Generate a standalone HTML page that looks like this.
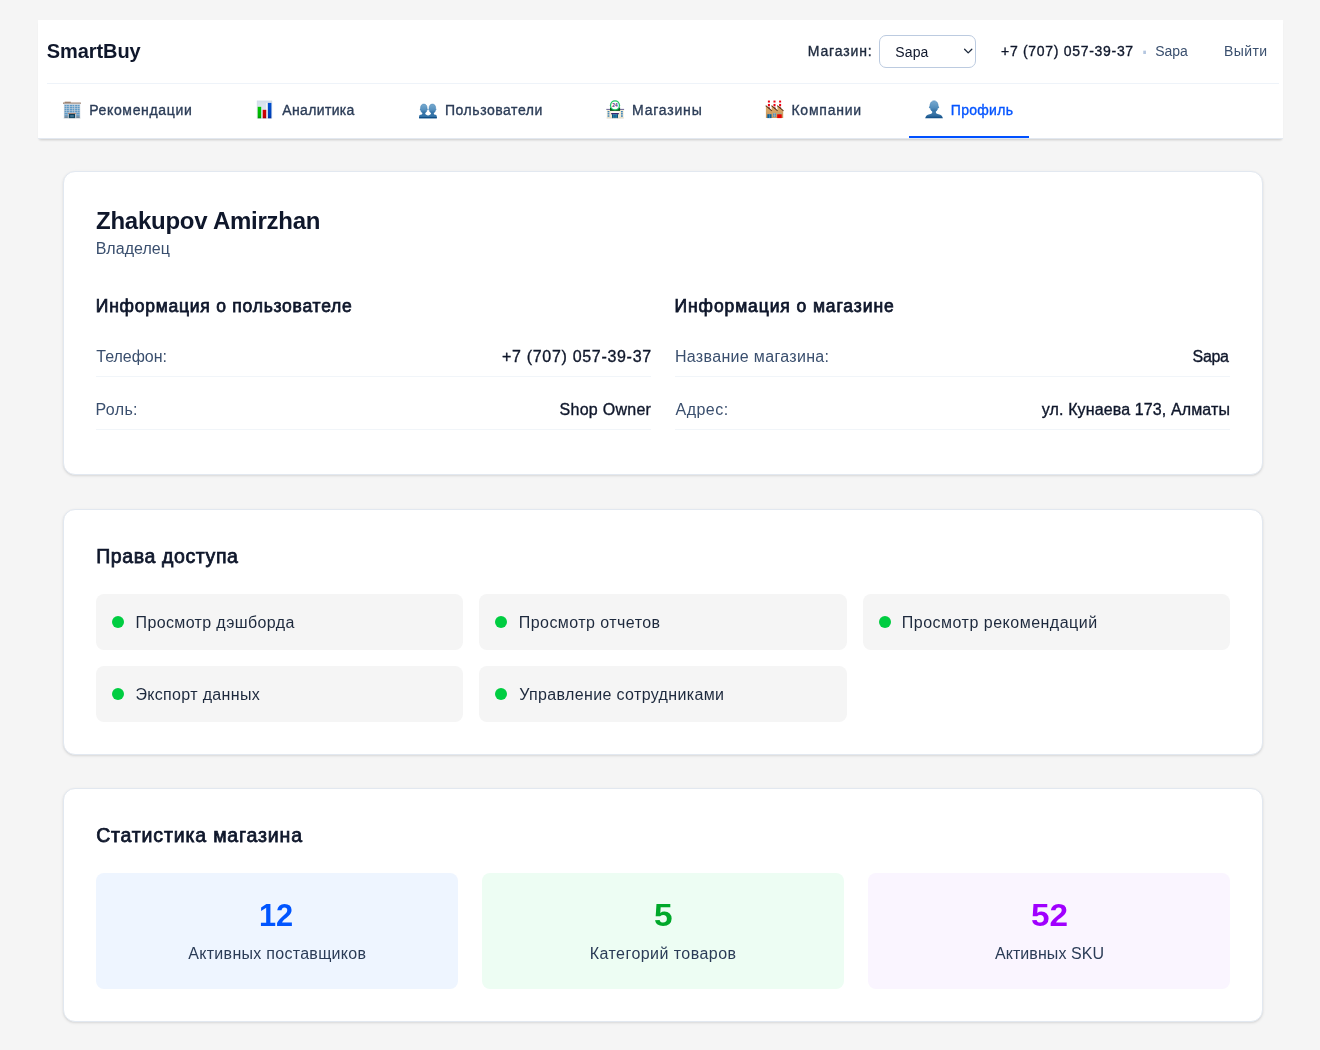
<!DOCTYPE html>
<html lang="ru">
<head>
<meta charset="utf-8">
<title>SmartBuy — Профиль</title>
<style>
*{box-sizing:border-box;margin:0;padding:0}
html,body{width:1320px;height:1050px;overflow:hidden}
body{background:#f5f5f5;font-family:"Liberation Sans",sans-serif;color:#0f172b;position:relative}
.t{position:absolute;white-space:nowrap;line-height:1;font-size:16px}
.abs{position:absolute}
.c9{color:#0f172b}.c8{color:#1d293d}.c7{color:#2b3c57}.c6{color:#3a4f6e}.cb{color:#0555ff}
.b{font-weight:700}
.m{-webkit-text-stroke:0.35px currentColor}
.sb{-webkit-text-stroke:0.75px currentColor}
#hdr{position:absolute;left:38px;top:20px;width:1245px;height:119px;background:#fff;border-bottom:1px solid #e2e8f0;box-shadow:0 2px 2px -1px rgba(0,0,0,.12),0 3px 3px -2px rgba(0,0,0,.06)}
.card{position:absolute;left:63px;width:1200px;background:#fff;border:1px solid #e2e8f0;border-radius:12px;box-shadow:0 1px 3px rgba(0,0,0,.1),0 1px 2px -1px rgba(0,0,0,.1)}
.hr{position:absolute;height:1px;background:#f1f5f9}
.chip{position:absolute;height:56px;width:367.33px;background:#f5f5f5;border-radius:8px}
.dot{position:absolute;width:12px;height:12px;border-radius:50%;background:#00cd41}
.stat{position:absolute;top:873px;height:116px;width:362px;border-radius:8px}
</style>
</head>
<body>

<div id="hdr"></div>
<div class="abs" style="left:47px;top:83px;width:1232px;height:1px;background:#eef3f9"></div>
<div class="abs" style="left:879px;top:35px;width:97px;height:33px;border:1px solid #bccbe0;border-radius:7px;background:#fff"></div>
<svg class="abs" style="left:962px;top:47px" width="12" height="9" viewBox="0 0 12 9"><path d="M2.6 2.3 L6.2 5.9 L9.8 2.3" fill="none" stroke="#1d293d" stroke-width="1.3" stroke-linecap="round" stroke-linejoin="round"/></svg>
<div class="abs" style="left:909px;top:136px;width:120px;height:2px;background:#0050ff"></div>

<!-- icon 1: office building -->
<svg class="abs" style="left:62px;top:100px" width="20" height="20" viewBox="62 100 20 20">
<defs><linearGradient id="gb1" x1="0" y1="0" x2="0" y2="1"><stop offset="0" stop-color="#cfdbe6"/><stop offset="1" stop-color="#b4c2ce"/></linearGradient></defs>
<rect x="64.7" y="101.7" width="6.1" height="1.1" fill="#9a7c66"/>
<rect x="63" y="102.6" width="17.9" height="1.1" fill="#846552"/>
<rect x="63.9" y="103.7" width="16.3" height="14.4" fill="url(#gb1)"/>
<g fill="#5f9ac6">
<rect x="64.6" y="104.9" width="4.3" height="1.45"/><rect x="69.7" y="104.9" width="4.6" height="1.45"/><rect x="75.1" y="104.9" width="4.5" height="1.45"/>
<rect x="64.6" y="106.9" width="4.3" height="1.45"/><rect x="69.7" y="106.9" width="4.6" height="1.45"/><rect x="75.1" y="106.9" width="4.5" height="1.45"/>
<rect x="64.6" y="108.9" width="4.3" height="1.45"/><rect x="69.7" y="108.9" width="4.6" height="1.45"/><rect x="75.1" y="108.9" width="4.5" height="1.45"/>
<rect x="64.6" y="110.9" width="4.3" height="1.45"/><rect x="69.7" y="110.9" width="4.6" height="1.45"/><rect x="75.1" y="110.9" width="4.5" height="1.45"/>
<rect x="64.6" y="112.9" width="3.2" height="1.45"/><rect x="76.3" y="112.9" width="3.3" height="1.45"/>
<rect x="64.6" y="114.8" width="3.2" height="1.1"/><rect x="76.3" y="114.8" width="3.3" height="1.1"/>
</g>
<g fill="#d4dfe9"><rect x="66.6" y="104.6" width=".4" height="8"/><rect x="72" y="104.6" width=".4" height="8"/><rect x="77.3" y="104.6" width=".4" height="8"/></g>
<rect x="64.6" y="116.5" width="3.2" height="1.1" fill="#3e6380"/><rect x="76.3" y="116.5" width="3.3" height="1.1" fill="#3e6380"/>
<rect x="68" y="113" width="7.9" height="1" fill="#b58b79"/>
<rect x="68.9" y="113.9" width="6.1" height="4.2" fill="#0d3f58"/>
<rect x="70.2" y="115" width="3.6" height="2.2" fill="#3a7094"/>
<rect x="63.6" y="117.9" width="16.9" height=".5" fill="#9aa5ae" opacity=".6"/>
</svg>
<!-- icon 2: bar chart -->
<svg class="abs" style="left:255px;top:99px" width="20" height="21" viewBox="255 99 20 21">
<defs>
<linearGradient id="gc0" x1="0" y1="0" x2="0" y2="1"><stop offset="0" stop-color="#d3dfeb"/><stop offset="1" stop-color="#e9eff6"/></linearGradient>
<linearGradient id="gcg" x1="0" y1="0" x2="0" y2="1"><stop offset="0" stop-color="#00c400"/><stop offset=".8" stop-color="#00b400"/><stop offset="1" stop-color="#008c00"/></linearGradient>
<linearGradient id="gcr" x1="0" y1="0" x2="0" y2="1"><stop offset="0" stop-color="#d00000"/><stop offset=".75" stop-color="#c40000"/><stop offset="1" stop-color="#960000"/></linearGradient>
<linearGradient id="gcb" x1="0" y1="0" x2="0" y2="1"><stop offset="0" stop-color="#0050d0"/><stop offset=".85" stop-color="#0040b8"/><stop offset="1" stop-color="#002a98"/></linearGradient>
</defs>
<rect x="257.1" y="100.9" width="14.8" height="17.5" fill="url(#gc0)" stroke="#c9d6e3" stroke-width=".5"/>
<rect x="266.2" y="103" width=".9" height="7" fill="#fbfbf6"/>
<rect x="257.7" y="106.8" width="3.5" height="11.5" fill="url(#gcg)"/>
<rect x="262.7" y="109.8" width="3.5" height="8.5" fill="url(#gcr)"/>
<rect x="267.9" y="102.9" width="3.5" height="15.4" fill="url(#gcb)"/>
</svg>
<!-- icon 3: two busts -->
<svg class="abs" style="left:418px;top:102px" width="20" height="18" viewBox="418 102 20 18">
<defs><linearGradient id="gu3" x1="0" y1="0" x2="0" y2="1"><stop offset="0" stop-color="#78aacf"/><stop offset=".65" stop-color="#5690be"/><stop offset="1" stop-color="#2b699f"/></linearGradient></defs>
<path d="M422.4 111.5 L422.4 113.4 C422.4 114.2 421.2 114.5 420.3 114.8 C419.4 115.1 419.1 115.7 419.1 116.5 L419.1 118.3 L436.8 118.3 L436.8 116.5 C436.8 115.7 436.5 115.1 435.6 114.8 C434.7 114.5 433.8 114.2 433.8 113.4 L433.8 111.5 L431 111.5 L431 113.4 C431 114.4 429.2 115.1 428.1 115.6 C427 115.1 425.2 114.4 425.2 113.4 L425.2 111.5 Z" fill="#3574a8"/>
<rect x="419.1" y="116.9" width="17.7" height="1.4" fill="#0f4d86"/>
<ellipse cx="423.8" cy="108.6" rx="3.3" ry="4.5" fill="url(#gu3)" stroke="#3f7fb3" stroke-width=".5"/>
<ellipse cx="432.4" cy="108.6" rx="3.3" ry="4.5" fill="url(#gu3)" stroke="#3f7fb3" stroke-width=".5"/>
<circle cx="420.4" cy="109.3" r=".6" fill="#4c88b8"/><circle cx="427.2" cy="109.3" r=".6" fill="#4c88b8"/><circle cx="429" cy="109.3" r=".6" fill="#4c88b8"/><circle cx="435.8" cy="109.3" r=".6" fill="#4c88b8"/>
</svg>
<!-- icon 4: convenience store -->
<svg class="abs" style="left:605px;top:99px" width="21" height="21" viewBox="605 99 21 21">
<rect x="606.8" y="109.6" width="16.8" height="8.5" fill="#f1ead2"/>
<rect x="606.3" y="108.9" width="17.8" height=".9" fill="#5a5288"/>
<rect x="610" y="107.5" width="10.1" height="3.4" fill="#0c5a20"/>
<circle cx="615" cy="105.3" r="5.1" fill="#1fc463"/>
<circle cx="615" cy="105.4" r="3.8" fill="#fff"/>
<text x="615" y="107.2" text-anchor="middle" font-family="Liberation Sans, sans-serif" font-weight="700" font-size="4.8" fill="#4b2a7a">24</text>
<rect x="610.6" y="111.4" width="8.8" height="1.5" fill="#fdfdf8"/>
<path d="M611 113 L619 113 L618.4 114.4 L611.6 114.4 Z" fill="#3a2670"/>
<rect x="612" y="114.3" width="6" height="3.8" fill="#1e76a6"/>
<rect x="612" y="114.3" width=".8" height="3.8" fill="#0b4668"/><rect x="617.2" y="114.3" width=".8" height="3.8" fill="#0b4668"/><rect x="614.7" y="114.8" width=".5" height="3.3" fill="#0b4668"/>
<g fill="#3b80ba"><rect x="607.6" y="111" width="1.8" height="1.4"/><rect x="607.6" y="113.1" width="1.8" height="1.4"/><rect x="607.6" y="115.3" width="1.8" height="1.5"/><rect x="621" y="111" width="1.8" height="1.4"/><rect x="621" y="113.1" width="1.8" height="1.4"/><rect x="621" y="115.3" width="1.8" height="1.5"/></g>
<rect x="606.6" y="117.8" width="17.2" height=".5" fill="#a9a48e" opacity=".7"/>
</svg>
<!-- icon 5: factory -->
<svg class="abs" style="left:764px;top:99px" width="21" height="21" viewBox="764 99 21 21">
<defs><linearGradient id="gf5" x1="0" y1="0" x2="0" y2="1"><stop offset="0" stop-color="#dcae6f"/><stop offset="1" stop-color="#c6935a"/></linearGradient></defs>
<g>
<rect x="767.9" y="100.4" width="2" height="8.5" fill="#f4f4f4"/><rect x="773.5" y="100.4" width="2" height="8.5" fill="#f4f4f4"/><rect x="779.1" y="100.4" width="2" height="8.5" fill="#f4f4f4"/>
<g fill="#ee0010"><rect x="767.9" y="100.6" width="2" height="1.9"/><rect x="767.9" y="104" width="2" height="2.3"/><rect x="773.5" y="100.6" width="2" height="1.9"/><rect x="773.5" y="104" width="2" height="2.3"/><rect x="779.1" y="100.6" width="2" height="1.9"/><rect x="779.1" y="104" width="2" height="2.3"/></g>
<g fill="#7c2230"><rect x="767.9" y="107.4" width="2" height="1.8"/><rect x="773.5" y="107.4" width="2" height="1.8"/><rect x="779.1" y="107.4" width="2" height="1.8"/></g>
</g>
<path d="M765.9 105.9 L771.7 110.9 L771.7 105.9 L777.4 110.9 L777.4 105.9 L783.2 110.9 L783.2 118.1 L765.9 118.1 Z" fill="url(#gf5)"/>
<path d="M765.7 105.6 L771.9 110.9 M771.5 105.6 L777.6 110.9 M777.2 105.6 L783.5 110.9" stroke="#5c3414" stroke-width="1.1" fill="none"/>
<rect x="767.3" y="114.2" width="4.2" height="3.9" fill="#0d6098"/><rect x="769.2" y="114.2" width=".5" height="3.9" fill="#6aa6cc"/>
<rect x="772.8" y="113" width="3.3" height="4.2" fill="#d8c7a4"/><g fill="#3f80b6"><rect x="773.1" y="113.4" width="1.2" height="1.5"/><rect x="774.7" y="113.4" width="1.2" height="1.5"/><rect x="773.1" y="115.3" width="1.2" height="1.5"/><rect x="774.7" y="115.3" width="1.2" height="1.5"/></g>
<rect x="777.2" y="113.3" width="4.6" height="1.1" fill="#9fb08a"/>
<rect x="777.2" y="114.3" width="4.5" height="3.8" fill="#e80000"/>
</svg>
<!-- icon 6: bust -->
<svg class="abs" style="left:924px;top:99px" width="21" height="21" viewBox="924 99 21 21">
<defs><linearGradient id="gu6" x1="0" y1="0" x2="0" y2="1"><stop offset="0" stop-color="#78aad0"/><stop offset=".6" stop-color="#558fbd"/><stop offset="1" stop-color="#2f6b9f"/></linearGradient>
<linearGradient id="gs6" x1="0" y1="0" x2="0" y2="1"><stop offset="0" stop-color="#4a84b4"/><stop offset=".7" stop-color="#2f6b9f"/><stop offset="1" stop-color="#0c4a84"/></linearGradient></defs>
<path d="M932.2 110 L932.2 112.5 C932.2 113.5 931 113.9 929.5 114.2 C927 114.7 925.8 115.9 925.2 118.2 L942.9 118.2 C942.3 115.9 941.1 114.7 938.6 114.2 C937.1 113.9 935.9 113.5 935.9 112.5 L935.9 110 Z" fill="url(#gs6)"/>
<circle cx="929.7" cy="107.3" r=".8" fill="#4a84b4"/><circle cx="938.4" cy="107.3" r=".8" fill="#4a84b4"/>
<ellipse cx="934.05" cy="106.3" rx="4.2" ry="5.6" fill="url(#gu6)" stroke="#4585b8" stroke-width=".5"/>
</svg>


<div class="card" style="top:171px;height:304px"></div>
<div class="hr" style="left:96px;width:555px;top:376px"></div>
<div class="hr" style="left:96px;width:555px;top:429px"></div>
<div class="hr" style="left:675px;width:555px;top:376px"></div>
<div class="hr" style="left:675px;width:555px;top:429px"></div>

<div class="card" style="top:509px;height:246px"></div>
<div class="chip" style="left:96px;top:594px"></div><div class="dot" style="left:112px;top:616px"></div>
<div class="chip" style="left:479.33px;top:594px"></div><div class="dot" style="left:495.33px;top:616px"></div>
<div class="chip" style="left:862.67px;top:594px"></div><div class="dot" style="left:878.67px;top:616px"></div>
<div class="chip" style="left:96px;top:666px"></div><div class="dot" style="left:112px;top:688px"></div>
<div class="chip" style="left:479.33px;top:666px"></div><div class="dot" style="left:495.33px;top:688px"></div>

<div class="card" style="top:788px;height:234px"></div>
<div class="stat" style="left:96px;background:#eef5ff"></div>
<div class="stat" style="left:482px;background:#edfdf3"></div>
<div class="stat" style="left:868px;background:#faf5ff"></div>

<div id="txt" style="position:absolute;left:0;top:0;width:1320px;height:1050px;will-change:transform">
<div id="logo" class="t b c9" style="left:46.87px;top:40.57px;font-size:20px;letter-spacing:-0.086px;">SmartBuy</div>
<div id="mag" class="t m c8" style="left:807.78px;top:44.45px;font-size:14px;letter-spacing:0.849px;">Магазин:</div>
<div id="ssap" class="t c9" style="left:895.33px;top:45.45px;font-size:14px;letter-spacing:0.114px;">Sapa</div>
<div id="phone" class="t m c9" style="left:1001.08px;top:44.35px;font-size:14px;letter-spacing:0.695px;">+7 (707) 057-39-37</div>
<div id="sep" class="t b" style="left:1141.79px;top:42.28px;font-size:22px;letter-spacing:0.000px;color:#b4c6e0;transform:scaleX(0.8539);transform-origin:0 0">·</div>
<div id="hsap" class="t c6" style="left:1155.33px;top:44.35px;font-size:14px;letter-spacing:-0.100px;">Sapa</div>
<div id="exit" class="t c6" style="left:1223.96px;top:44.35px;font-size:14px;letter-spacing:0.411px;">Выйти</div>
<div id="n1" class="t m c7" style="left:89.14px;top:102.95px;font-size:14px;letter-spacing:0.668px;">Рекомендации</div>
<div id="n2" class="t m c7" style="left:282.33px;top:102.95px;font-size:14px;letter-spacing:0.345px;">Аналитика</div>
<div id="n3" class="t m c7" style="left:445.03px;top:102.95px;font-size:14px;letter-spacing:0.533px;">Пользователи</div>
<div id="n4" class="t m c7" style="left:632.10px;top:102.95px;font-size:14px;letter-spacing:0.790px;">Магазины</div>
<div id="n5" class="t m c7" style="left:791.38px;top:102.95px;font-size:14px;letter-spacing:0.781px;">Компании</div>
<div id="n6" class="t m cb" style="left:950.84px;top:102.95px;font-size:14px;letter-spacing:0.280px;">Профиль</div>
<div id="name" class="t b c9" style="left:96.02px;top:208.78px;font-size:24px;letter-spacing:-0.250px;">Zhakupov Amirzhan</div>
<div id="role" class="t c6" style="left:95.67px;top:241.46px;font-size:16px;letter-spacing:0.022px;">Владелец</div>
<div id="h1" class="t sb c9" style="left:95.86px;top:297.89px;font-size:17.5px;letter-spacing:0.759px;">Информация о пользователе</div>
<div id="h2" class="t sb c9" style="left:674.54px;top:297.89px;font-size:17.5px;letter-spacing:0.904px;">Информация о магазине</div>
<div id="l1" class="t c6" style="left:96.30px;top:349.46px;font-size:16px;letter-spacing:-0.029px;">Телефон:</div>
<div id="v1" class="t m c9" style="left:502.00px;top:349.46px;font-size:16px;letter-spacing:0.688px;">+7 (707) 057-39-37</div>
<div id="l2" class="t c6" style="left:95.56px;top:402.46px;font-size:16px;letter-spacing:0.342px;">Роль:</div>
<div id="v2" class="t m c9" style="left:559.59px;top:402.46px;font-size:16px;letter-spacing:0.267px;">Shop Owner</div>
<div id="l3" class="t c6" style="left:674.91px;top:349.46px;font-size:16px;letter-spacing:0.330px;">Название магазина:</div>
<div id="v3" class="t m c9" style="left:1192.59px;top:349.46px;font-size:16px;letter-spacing:-0.316px;">Sapa</div>
<div id="l4" class="t c6" style="left:675.50px;top:402.46px;font-size:16px;letter-spacing:0.487px;">Адрес:</div>
<div id="v4" class="t m c9" style="left:1041.77px;top:402.46px;font-size:16px;letter-spacing:0.125px;">ул. Кунаева 173, Алматы</div>
<div id="t2" class="t sb c9" style="left:96.17px;top:546.59px;font-size:19.5px;letter-spacing:0.616px;">Права доступа</div>
<div id="c1" class="t c8" style="left:135.56px;top:614.86px;font-size:16px;letter-spacing:0.368px;">Просмотр дэшборда</div>
<div id="c2" class="t c8" style="left:518.81px;top:614.86px;font-size:16px;letter-spacing:0.444px;">Просмотр отчетов</div>
<div id="c3" class="t c8" style="left:901.78px;top:614.86px;font-size:16px;letter-spacing:0.498px;">Просмотр рекомендаций</div>
<div id="c4" class="t c8" style="left:135.45px;top:686.86px;font-size:16px;letter-spacing:0.333px;">Экспорт данных</div>
<div id="c5" class="t c8" style="left:519.21px;top:686.86px;font-size:16px;letter-spacing:0.360px;">Управление сотрудниками</div>
<div id="t3" class="t sb c9" style="left:96.13px;top:825.79px;font-size:19.5px;letter-spacing:0.834px;">Статистика магазина</div>
<div id="s1" class="t b" style="left:259.35px;top:898.91px;font-size:32px;letter-spacing:0.000px;color:#0055ff;transform:scaleX(0.9612);transform-origin:0 0">12</div>
<div id="s2" class="t b" style="left:653.54px;top:898.91px;font-size:32px;letter-spacing:0.000px;color:#00a82a;transform:scaleX(1.0432);transform-origin:0 0">5</div>
<div id="s3" class="t b" style="left:1030.57px;top:898.91px;font-size:32px;letter-spacing:0.000px;color:#a000ff;transform:scaleX(1.0406);transform-origin:0 0">52</div>
<div id="sl1" class="t c7" style="left:188.33px;top:945.56px;font-size:16px;letter-spacing:0.288px;">Активных поставщиков</div>
<div id="sl2" class="t c7" style="left:589.72px;top:945.56px;font-size:16px;letter-spacing:0.453px;">Категорий товаров</div>
<div id="sl3" class="t c7" style="left:994.89px;top:945.56px;font-size:16px;letter-spacing:0.079px;">Активных SKU</div>
</div>

</body>
</html>
